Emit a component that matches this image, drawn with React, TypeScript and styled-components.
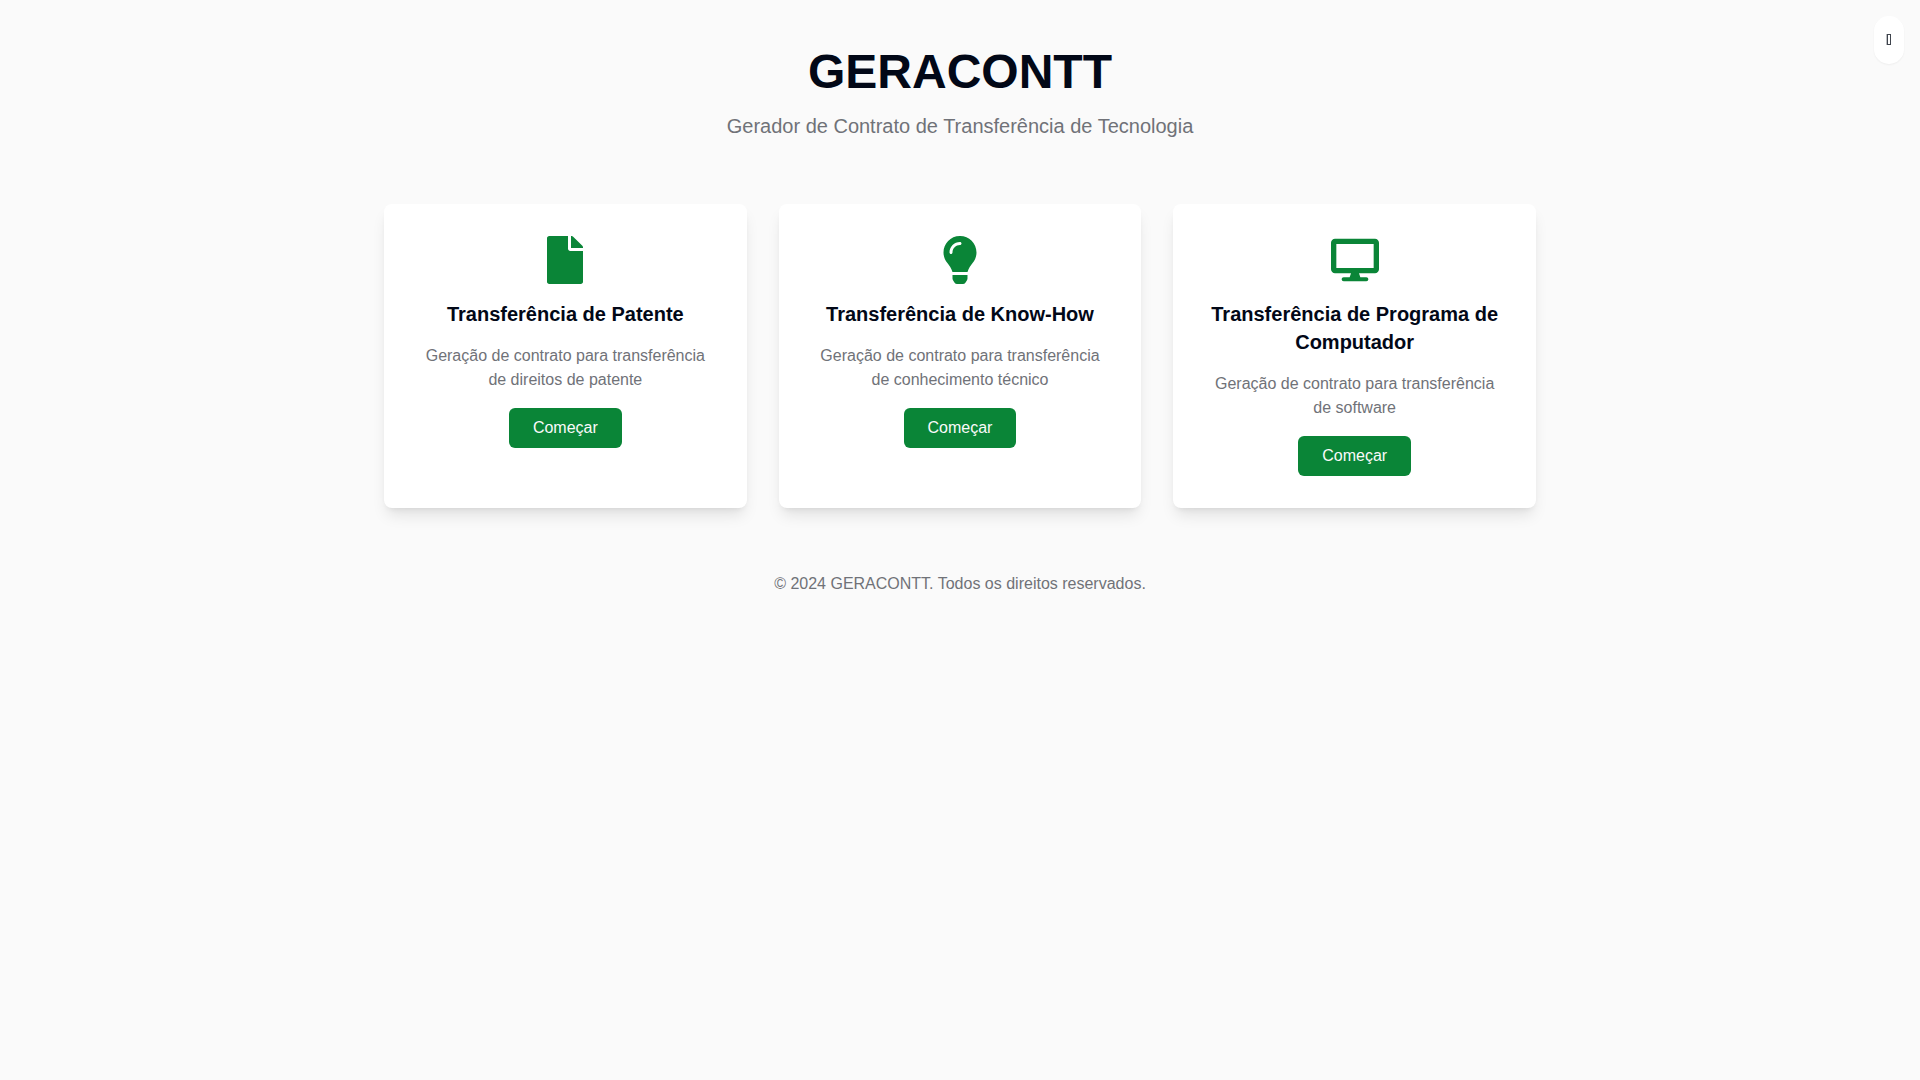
import React, { useState } from "react";
import styled, { createGlobalStyle } from "styled-components";
import type { IconType } from "react-icons";
import { FaDesktop, FaFile, FaLightbulb } from "react-icons/fa";

const GlobalStyle = createGlobalStyle`
  *, *::before, *::after {
    box-sizing: border-box;
  }
  body {
    margin: 0;
    background: #fafafa;
    color: #020817;
    font-family: "Liberation Sans", Arial, sans-serif;
    font-size: 16px;
    line-height: 24px;
  }
`;

const ThemeToggle = styled.button`
  position: fixed;
  top: 16px;
  right: 16px;
  padding: 12px;
  border: 0;
  border-radius: 9999px;
  background: #ffffff;
  color: #3f444d;
  cursor: pointer;
  box-shadow: 0 1px 2px rgba(0, 0, 0, 0.05);

  > svg {
    display: block;
  }
`;

const Page = styled.div`
  max-width: 1184px;
  margin: 0 auto;
  padding: 48px 16px;
  text-align: center;
`;

const Header = styled.header`
  margin-bottom: 64px;
`;

const Brand = styled.h1`
  margin: 0 0 16px;
  font-size: 48px;
  line-height: 48px;
  font-weight: 700;
`;

const Tagline = styled.p`
  margin: 0;
  color: #707278;
  font-size: 20px;
  line-height: 28px;
`;

const Cards = styled.main`
  display: grid;
  grid-template-columns: repeat(3, minmax(0, 1fr));
  gap: 32px;

  @media (max-width: 768px) {
    grid-template-columns: minmax(0, 1fr);
  }
`;

const Card = styled.article`
  display: flex;
  flex-direction: column;
  align-items: center;
  gap: 16px;
  padding: 32px;
  border-radius: 8px;
  background: #ffffff;
  box-shadow: 0 10px 15px -3px rgba(0, 0, 0, 0.1), 0 4px 6px -4px rgba(0, 0, 0, 0.1);

  > svg {
    color: #0a8537;
  }
`;

const CardTitle = styled.h2`
  margin: 0;
  font-size: 20px;
  line-height: 28px;
  font-weight: 700;
`;

const CardText = styled.p`
  margin: 0;
  color: #707278;
`;

const StartButton = styled.button`
  padding: 8px 24px;
  border: 0;
  border-radius: 6px;
  background: #0a8537;
  color: #fafafa;
  font: inherit;
  cursor: pointer;

  &:hover {
    background: #08702e;
  }
`;

const Footer = styled.footer`
  margin-top: 64px;
  color: #707278;
`;

const contracts: { title: string; text: string; icon: IconType }[] = [
  {
    title: "Transferência de Patente",
    text: "Geração de contrato para transferência de direitos de patente",
    icon: FaFile,
  },
  {
    title: "Transferência de Know-How",
    text: "Geração de contrato para transferência de conhecimento técnico",
    icon: FaLightbulb,
  },
  {
    title: "Transferência de Programa de Computador",
    text: "Geração de contrato para transferência de software",
    icon: FaDesktop,
  },
];

function ToggleGlyph() {
  return (
    <svg width="6" height="24" viewBox="0 0 6 24" fill="none" stroke="currentColor" aria-hidden="true">
      <path d="M.5 6v11" strokeOpacity=".35" />
      <rect x="1.5" y="6.5" width="3" height="10" />
    </svg>
  );
}

export default function App() {
  const [pressed, setPressed] = useState(false);

  return (
    <>
      <GlobalStyle />
      <Page>
        <Header>
          <Brand>GERACONTT</Brand>
          <Tagline>Gerador de Contrato de Transferência de Tecnologia</Tagline>
        </Header>
        <Cards>
          {contracts.map(({ title, text, icon: Icon }) => (
            <Card key={title}>
              <Icon size={48} aria-hidden="true" />
              <CardTitle>{title}</CardTitle>
              <CardText>{text}</CardText>
              <StartButton type="button">Começar</StartButton>
            </Card>
          ))}
        </Cards>
        <Footer>© 2024 GERACONTT. Todos os direitos reservados.</Footer>
      </Page>
      <ThemeToggle
        type="button"
        aria-label="Alternar tema"
        aria-pressed={pressed}
        onClick={() => setPressed(!pressed)}
      >
        <ToggleGlyph />
      </ThemeToggle>
    </>
  );
}
